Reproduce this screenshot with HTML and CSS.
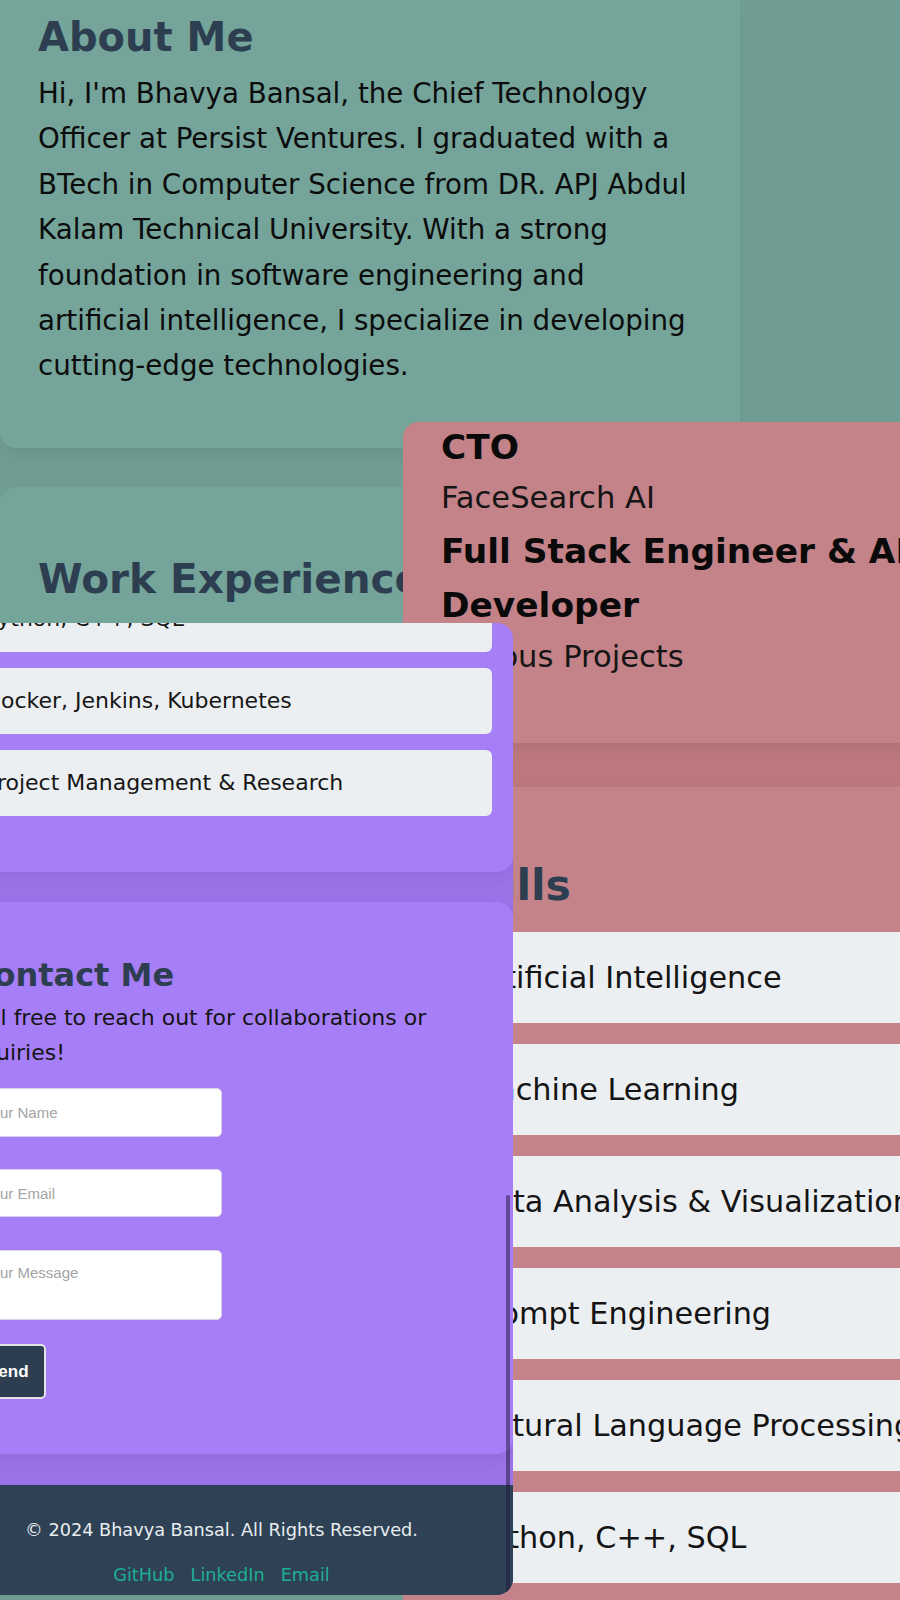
FILE: index.html
```html
<!DOCTYPE html>
<html lang="en">
<head>
<meta charset="utf-8">
<title>Bhavya Bansal</title>
<link rel="stylesheet" href="styles.css">
</head>
<body>
<main class="page">
  <section class="card about">
    <h2 class="title">About Me</h2>
    <p class="about-text">Hi, I'm Bhavya Bansal, the Chief Technology Officer at Persist Ventures. I graduated with a BTech in Computer Science from DR. APJ Abdul Kalam Technical University. With a strong foundation in software engineering and artificial intelligence, I specialize in developing cutting-edge technologies.</p>
  </section>
  <section class="card work">
    <h2 class="title">Work Experience</h2>
  </section>
</main>

<div class="win win-pink">
  <section class="pcard job">
    <h3 class="job-title">CTO</h3>
    <p class="job-org">FaceSearch AI</p>
    <h3 class="job-title job-wrap">Full Stack Engineer &amp; AI Developer</h3>
    <p class="job-org">Various Projects</p>
  </section>
  <section class="pcard pskills">
    <h2 class="pskills-title">Skills</h2>
    <ul class="plist">
      <li>Artificial Intelligence</li>
      <li>Machine Learning</li>
      <li>Data Analysis &amp; Visualization</li>
      <li>Prompt Engineering</li>
      <li>Natural Language Processing</li>
      <li>Python, C++, SQL</li>
    </ul>
  </section>
</div>

<div class="win win-purple">
  <div class="vinner">
    <section class="vcard vskills">
      <ul class="vlist">
        <li>Python, C++, SQL</li>
        <li>Docker, Jenkins, Kubernetes</li>
        <li>Project Management &amp; Research</li>
      </ul>
    </section>
    <section class="vcard contact">
      <h2 class="contact-title">Contact Me</h2>
      <p class="contact-text">Feel free to reach out for collaborations or inquiries!</p>
      <form class="contact-form">
        <input class="field" type="text" placeholder="Your Name">
        <input class="field" type="email" placeholder="Your Email">
        <textarea class="field field-area" placeholder="Your Message"></textarea>
        <button class="send" type="button">Send</button>
      </form>
    </section>
    <footer class="footer">
      <p class="copy">© 2024 Bhavya Bansal. All Rights Reserved.</p>
      <nav class="links">
        <a href="#">GitHub</a>
        <a href="#">LinkedIn</a>
        <a href="#">Email</a>
      </nav>
    </footer>
  </div>
  <div class="scrollbar"></div>
</div>
</body>
</html>
```
FILE: styles.css
```css
html, body {
  margin: 0;
  padding: 0;
  width: 900px;
  height: 1600px;
  overflow: hidden;
}
body {
  position: relative;
  background: #6f9d93;
  font-family: "DejaVu Sans", "Noto Sans", sans-serif;
  color: #111;
}

/* base teal page */
.page {
  display: flex;
  flex-direction: column;
}
.card {
  background: #74a49a;
  box-sizing: border-box;
  box-shadow: 0 12px 16px -6px rgba(0, 0, 0, 0.08);
}
.about {
  width: 740px;
  padding: 13px 45px 59px 38px;
  border-radius: 0 0 16px 16px;
}
.title {
  margin: 0;
  font-size: 40px;
  line-height: 48px;
  font-weight: 700;
  color: #2c3e50;
}
.about-text {
  margin: 10px 0 0;
  font-size: 27.7px;
  line-height: 45.4px;
  color: #0c0c0c;
}
.work {
  width: 740px;
  margin-top: 39px;
  min-height: 400px;
  padding: 68px 38px 0;
  border-radius: 16px 16px 0 0;
}
.work .title {
  font-size: 40.5px;
}

/* overlapping windows */
.win {
  position: absolute;
  overflow: hidden;
}
.win-pink {
  left: 403px;
  top: 422px;
  width: 700px;
  height: 1178px;
  background: #bc787d;
  border-top-left-radius: 16px;
}
.pcard {
  background: #c48388;
  box-sizing: border-box;
  box-shadow: 0 6px 14px rgba(0, 0, 0, 0.06);
}
.job {
  height: 321px;
  padding: 0 0 0 38px;
}
.job-title {
  margin: 0;
  font-size: 34.4px;
  line-height: 51px;
  font-weight: 700;
  color: #0a0a0a;
}
.job-wrap {
  max-width: 500px;
  margin-top: 4px;
  line-height: 54px;
}
.job-org {
  margin: 2px 0 0;
  font-size: 30.6px;
  line-height: 45px;
  color: #151515;
}
.pskills {
  margin-top: 44px;
  padding: 72px 0 40px;
}
.pskills-title {
  margin: 0 0 0 40px;
  font-size: 42.5px;
  line-height: 54px;
  font-weight: 700;
  color: #2c3e50;
}
.plist {
  list-style: none;
  margin: 19px 0 0;
  padding: 0;
}
.plist li {
  margin: 0 0 21px 38px;
  width: 620px;
  height: 91px;
  box-sizing: border-box;
  padding-left: 30px;
  line-height: 91px;
  font-size: 30.3px;
  background: #eceff1;
  border-radius: 6px;
  color: #141414;
  white-space: nowrap;
}

.win-purple {
  left: 0;
  top: 623px;
  width: 513px;
  height: 972px;
  background: #9b72e8;
  border-radius: 0 16px 16px 0;
}
.vinner {
  margin-left: -70px;
  width: 583px;
  display: flex;
  flex-direction: column;
}
.vcard {
  background: #a67ef8;
  box-sizing: border-box;
  border-radius: 16px;
  box-shadow: 0 6px 14px rgba(0, 0, 0, 0.05);
}
.vskills {
  margin-top: -60px;
  padding: 23px 0 40px;
  border-radius: 0 0 16px 16px;
}
.vlist {
  list-style: none;
  margin: 0;
  padding: 0;
}
.vlist li {
  margin: 0 21px 16px 30px;
  height: 66px;
  box-sizing: border-box;
  padding-left: 24px;
  line-height: 66px;
  font-size: 22px;
  background: #eceff1;
  border-radius: 6px;
  color: #161616;
  white-space: nowrap;
}
.contact {
  margin-top: 30px;
  height: 552px;
  padding: 54px 40px 0;
}
.contact-title {
  margin: 0;
  font-size: 32px;
  line-height: 38px;
  font-weight: 700;
  color: #2c3e50;
}
.contact-text {
  margin: 6px 0 0 -8px;
  font-size: 22px;
  line-height: 35px;
  color: #141414;
}
.contact-form {
  margin-top: 18px;
  display: flex;
  flex-direction: column;
  align-items: flex-start;
}
.field {
  display: block;
  width: 252px;
  height: 49px;
  box-sizing: border-box;
  padding: 0 12px;
  margin: 0 0 32px;
  border: 1px solid #d9d2e6;
  border-radius: 5px;
  background: #fff;
  font-family: "Liberation Sans", Arial, sans-serif;
  font-size: 15px;
  color: #333;
}
.field::placeholder {
  color: #a3a3a3;
}
.field + .field {
  height: 48px;
}
.field-area {
  height: 70px !important;
  margin: 1px 0 24px;
  padding-top: 13px;
  resize: none;
}
.send {
  height: 55px;
  padding: 0 15px;
  border: 2px solid #e3e3e3;
  border-radius: 5px;
  background: #2c3e50;
  color: #fff;
  font-family: "Liberation Sans", Arial, sans-serif;
  font-weight: 700;
  font-size: 17px;
}
.footer {
  margin-top: 31px;
  height: 130px;
  background: #2f4255;
  text-align: center;
  padding-top: 31px;
  box-sizing: border-box;
}
.copy {
  margin: 0;
  font-size: 17.7px;
  line-height: 28px;
  color: #e8edf0;
}
.links {
  margin-top: 17px;
  display: flex;
  justify-content: center;
  gap: 16px;
  font-size: 17.7px;
  line-height: 28px;
}
.links a {
  color: #1eae94;
  text-decoration: none;
}
.scrollbar {
  position: absolute;
  right: 3px;
  top: 572px;
  bottom: 0;
  width: 4px;
  border-radius: 2px;
  background: rgba(30, 20, 60, 0.5);
}
```
